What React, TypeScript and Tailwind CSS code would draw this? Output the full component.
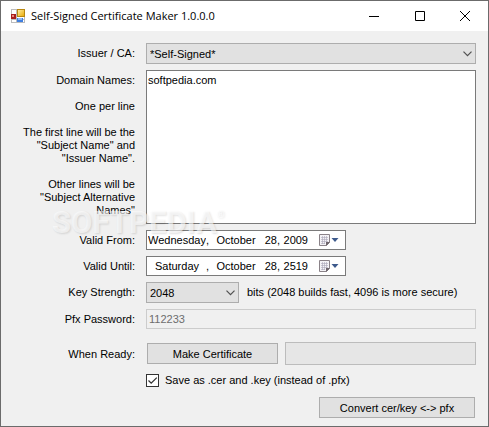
import { useId, useState, type ReactNode } from "react";

function AppIcon() {
  return (
    <svg width="16" height="16" viewBox="0 0 16 16" className="shrink-0" aria-hidden="true">
      <defs>
        <linearGradient id="gold" x1="0" y1="0" x2="1" y2="1">
          <stop offset="0" stopColor="#fff0a8" />
          <stop offset="1" stopColor="#e9a800" />
        </linearGradient>
      </defs>
      <rect x="1.5" y="1.5" width="13" height="13" fill="#fff" stroke="#bcbcbc" />
      <path d="M6.5 1v14M1 11.5h14" stroke="#bcbcbc" />
      <rect x="1" y="6" width="5" height="5" fill="#a81c1c" />
      <rect x="2" y="7" width="2" height="2" fill="#e88a7c" />
      <rect x="7.5" y="1.5" width="7" height="7" fill="url(#gold)" stroke="#b88710" />
      <rect x="7" y="10" width="6" height="4" fill="#3f7fe0" />
      <rect x="8" y="10" width="4" height="2" fill="#8db8f5" />
    </svg>
  );
}

function Chevron() {
  return (
    <svg
      width="9"
      height="6"
      viewBox="0 0 9 6"
      className="pointer-events-none absolute top-2 right-1"
      fill="none"
      stroke="#505050"
      strokeWidth="1.2"
      aria-hidden="true"
    >
      <path d="M0.5 0.7 4.5 4.7 8.5 0.7" />
    </svg>
  );
}

function Row({ label, htmlFor, children }: { label: string; htmlFor: string; children: ReactNode }) {
  return (
    <div className="flex items-center gap-[11px]">
      <label htmlFor={htmlFor} className="w-[134px] shrink-0 text-right">
        {label}
      </label>
      {children}
    </div>
  );
}

function Combo({ id, options, className }: { id: string; options: string[]; className: string }) {
  return (
    <div className={"relative " + className}>
      <select
        id={id}
        className="block h-[21px] w-full appearance-none border border-[#adadad] bg-[#e1e1e1] pt-px pl-[3px] outline-none"
      >
        {options.map((o) => (
          <option key={o}>{o}</option>
        ))}
      </select>
      <Chevron />
    </div>
  );
}

function DatePicker({ id, weekday, month, day, year }: { id: string; weekday: string; month: string; day: string; year: string }) {
  return (
    <div role="group" className="flex h-5 w-[200px] items-center border border-[#7a7a7a] bg-white pl-px">
      <input id={id} defaultValue={weekday} className="w-[58px] text-center outline-none" />
      <span className="w-[10px]">,</span>
      <input aria-label="Month" defaultValue={month} className="w-10 text-center outline-none" />
      <input aria-label="Day" defaultValue={day} className="ml-2 w-[13px] text-right outline-none" />
      <span className="w-[5px]">,</span>
      <input aria-label="Year" defaultValue={year} className="w-[26px] text-right outline-none" />
      <button type="button" aria-label="Open calendar" className="ml-[10px]">
        <svg width="22" height="14" viewBox="0 0 22 14" aria-hidden="true">
          <path d="M1.5 1.5h10v8l-3 3h-7z" fill="#f4f3f6" stroke="#8a8288" />
          <path d="M3 4.5h7M3 6.5h7M3 8.5h7M3 10.5h4M4.5 3v8M6.5 3v8M8.5 3v6" stroke="#a9a6b8" strokeWidth="0.6" />
          <path d="M8 13v-4h4z" fill="#6f666c" />
          <path d="M13.5 5h7l-3.5 4z" fill="#3d5a8c" />
        </svg>
      </button>
    </div>
  );
}

export default function App() {
  const id = useId();
  const [keyFiles, setKeyFiles] = useState(true);
  return (
    <div className="relative flex min-h-screen flex-col border border-[#6b6b6b] bg-[#f0f0f0] font-['Liberation_Sans',Arial,sans-serif] text-[11px] leading-[13px] text-black">
      <header className="flex h-[30px] items-center bg-white pl-[9px]">
        <AppIcon />
        <h1 className="ml-[5px] flex-1 font-['Open_Sans','Noto_Sans',sans-serif] text-[11px] leading-4">
          Self-Signed Certificate Maker 1.0.0.0
        </h1>
        <button type="button" aria-label="Minimize" className="flex h-full w-[46px] items-center justify-center">
          <svg width="10" height="10" stroke="#000"><path d="M0 5.5h10" /></svg>
        </button>
        <button type="button" aria-label="Maximize" className="flex h-full w-[45px] items-center justify-center">
          <svg width="10" height="10" stroke="#000" fill="none"><path d="M0.5 0.5h9v9h-9z" /></svg>
        </button>
        <button type="button" aria-label="Close" className="flex h-full w-[46px] items-center justify-center">
          <svg width="10" height="10" stroke="#000"><path d="M0 0 10 10M10 0 0 10" /></svg>
        </button>
      </header>

      <main className="flex flex-col pt-3 pr-3">
        <div className="flex flex-col gap-[6px]">
          <Row label="Issuer / CA:" htmlFor={id + "ca"}>
            <Combo id={id + "ca"} options={["*Self-Signed*"]} className="flex-1" />
          </Row>
          <div className="flex gap-[11px]">
            <label htmlFor={id + "names"} className="w-[134px] shrink-0 pt-1 text-right">
              Domain Names:
              <br />
              <br />
              One per line
              <br />
              <br />
              The first line will be the
              <br />
              "Subject Name" and
              <br />
              "Issuer Name".
              <br />
              <br />
              Other lines will be
              <br />
              "Subject Alternative
              <br />
              Names"
            </label>
            <textarea
              id={id + "names"}
              defaultValue="softpedia.com"
              className="h-[154px] flex-1 resize-none border border-[#7a7a7a] bg-white px-px py-[3px] outline-none"
            />
          </div>
          <Row label="Valid From:" htmlFor={id + "from"}>
            <DatePicker id={id + "from"} weekday="Wednesday" month="October" day="28" year="2009" />
          </Row>
          <Row label="Valid Until:" htmlFor={id + "until"}>
            <DatePicker id={id + "until"} weekday="Saturday" month="October" day="28" year="2519" />
          </Row>
          <Row label="Key Strength:" htmlFor={id + "key"}>
            <Combo id={id + "key"} options={["2048", "4096"]} className="w-[93px]" />
            <span className="-ml-[3px]">bits (2048 builds fast, 4096 is more secure)</span>
          </Row>
          <Row label="Pfx Password:" htmlFor={id + "pfx"}>
            <input
              id={id + "pfx"}
              disabled
              defaultValue="112233"
              className="h-5 min-w-0 flex-1 border border-[#cccccc] bg-[#f0f0f0] px-[2px] text-[#6d6d6d]"
            />
          </Row>
        </div>

        <div className="mt-[13px] flex items-center">
          <label htmlFor={id + "make"} className="w-[134px] shrink-0 pt-px text-right">When Ready:</label>
          <button id={id + "make"} type="button" className="ml-3 h-[21px] w-[131px] border border-[#adadad] bg-[#e1e1e1] pt-px">
            Make Certificate
          </button>
          <div role="progressbar" aria-label="Progress" className="ml-[7px] h-[23px] flex-1 border border-[#bcbcbc] bg-[#e6e6e6]" />
        </div>

        <label className="mt-[9px] ml-[145px] flex items-center gap-[6px] self-start">
          <span className="relative flex">
            <input
              type="checkbox"
              checked={keyFiles}
              onChange={(e) => setKeyFiles(e.target.checked)}
              className="size-[13px] appearance-none border border-[#333333] bg-white"
            />
            {keyFiles && (
              <svg width="13" height="13" className="pointer-events-none absolute inset-0" fill="none" stroke="#333" strokeWidth="1.3">
                <path d="M2.5 6.5 5.2 9.2 10.8 3.6" />
              </svg>
            )}
          </span>
          Save as .cer and .key (instead of .pfx)
        </label>

        <button type="button" className="mt-[10px] mr-px mb-2 h-[21px] w-[156px] self-end border border-[#adadad] bg-[#e1e1e1] pt-px">
          Convert cer/key &lt;-&gt; pfx
        </button>
      </main>

      <div
        aria-hidden="true"
        className="pointer-events-none absolute top-[206px] left-[51px] flex items-start font-[Roboto,sans-serif] text-[31px] leading-8 font-bold text-white/60 [text-shadow:1px_1px_2px_rgb(0_0_0/0.12)]"
      >
        SOFTPEDIA<span className="text-[10px] leading-4">®</span>
      </div>
    </div>
  );
}
